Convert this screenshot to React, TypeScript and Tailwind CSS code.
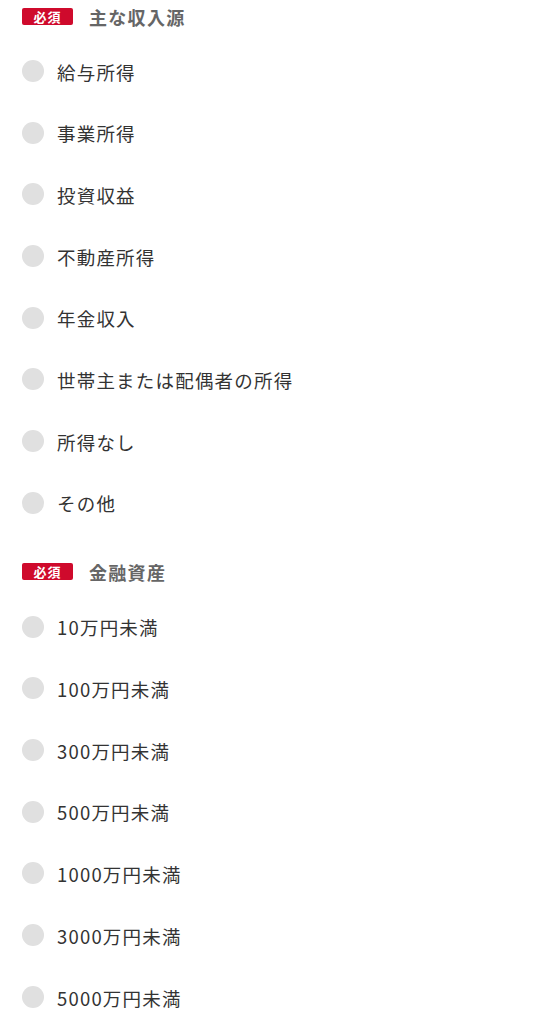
import React from "react";

const income = ["給与所得", "事業所得", "投資収益", "不動産所得", "年金収入", "世帯主または配偶者の所得", "所得なし", "その他"];
const assets = ["10万円未満", "100万円未満", "300万円未満", "500万円未満", "1000万円未満", "3000万円未満", "5000万円未満"];

function Heading({ title }: { title: string }) {
  return (
    <div className="flex h-[33px] items-center">
      <span className="flex h-[17px] w-[51px] items-center justify-center rounded-[2px] bg-[#cf0a2c] text-[13px] font-bold leading-none tracking-[1px] text-white">
        必須
      </span>
      <span className="ml-[16px] text-[18px] font-bold leading-none tracking-[1.3px] text-[#666666]">{title}</span>
    </div>
  );
}

function Row({ label }: { label: string }) {
  return (
    <div className="flex h-[61.7px] items-center">
      <span className="mb-[2px] h-[22px] w-[22px] shrink-0 rounded-full bg-[#e0e0e0]" />
      <span className="ml-[13px] text-[18.5px] leading-none tracking-[1.2px] text-[#333333]">{label}</span>
    </div>
  );
}

export default function App() {
  return (
    <div
      className="min-h-[1024px] w-full bg-white pl-[22px]"
      style={{ fontFamily: '"Noto Sans CJK JP", "Noto Sans", sans-serif' }}
    >
      <Heading title="主な収入源" />
      <div className="mt-[8px]">
        {income.map((l) => (
          <Row key={l} label={l} />
        ))}
      </div>
      <div className="mt-[20.7px]">
        <Heading title="金融資産" />
      </div>
      <div className="mt-[8.6px]">
        {assets.map((l) => (
          <Row key={l} label={l} />
        ))}
      </div>
    </div>
  );
}
